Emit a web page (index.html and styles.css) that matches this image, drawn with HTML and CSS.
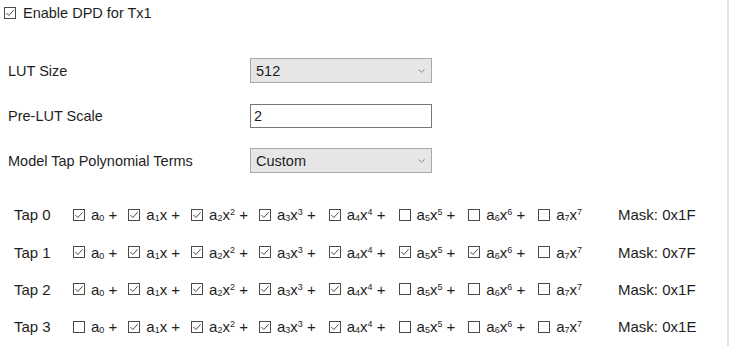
FILE: index.html
```html
<!DOCTYPE html>
<html lang="en">

<head>
    <meta charset="UTF-8">
    <meta name="viewport" content="width=device-width, initial-scale=1.0">
    <title>DPD Settings</title>
    <link rel="stylesheet" href="styles.css">
</head>

<body>
    <div class="panel">
        <div class="enable-row">
            <svg class="box" viewBox="0 0 12 12"><rect x="0.5" y="0.5" width="11" height="11"/><path d="M2.4 6 L4.9 8.5 L9.6 3.3"/></svg>
            <span>Enable DPD for Tx1</span>
        </div>

        <div class="form">
            <div class="label">LUT Size</div>
            <div class="select">
                <span>512</span>
                <svg class="chev" viewBox="0 0 7 4"><path d="M0.5 0.5 L3.5 3.3 L6.5 0.5"/></svg>
            </div>

            <div class="label">Pre-LUT Scale</div>
            <div class="input">2</div>

            <div class="label">Model Tap Polynomial Terms</div>
            <div class="select">
                <span>Custom</span>
                <svg class="chev" viewBox="0 0 7 4"><path d="M0.5 0.5 L3.5 3.3 L6.5 0.5"/></svg>
            </div>
        </div>

        <div class="taps" id="taps"></div>
    </div>

    <script>
        var tapsElem = document.getElementById('taps');
        var terms = [
            'a<sub>0</sub> +',
            'a<sub>1</sub>x +',
            'a<sub>2</sub>x<sup>2</sup> +',
            'a<sub>3</sub>x<sup>3</sup> +',
            'a<sub>4</sub>x<sup>4</sup> +',
            'a<sub>5</sub>x<sup>5</sup> +',
            'a<sub>6</sub>x<sup>6</sup> +',
            'a<sub>7</sub>x<sup>7</sup>'
        ];
        // mask per tap, bit 0 = a0
        var masks = [0x1F, 0x7F, 0x1F, 0x1E];

        var boxOn = '<svg class="box" viewBox="0 0 12 12"><rect x="0.5" y="0.5" width="11" height="11"/><path d="M2.4 6 L4.9 8.5 L9.6 3.3"/></svg>';
        var boxOff = '<svg class="box" viewBox="0 0 12 12"><rect x="0.5" y="0.5" width="11" height="11"/></svg>';

        masks.forEach(function (mask, i) {
            var html = '<span class="tap-name">Tap ' + i + '</span>';
            terms.forEach(function (t, b) {
                html += '<span class="term">' + ((mask >> b) & 1 ? boxOn : boxOff)
                    + '<span class="term-text">' + t + '</span></span>';
            });
            html += '<span class="mask">Mask: 0x' + mask.toString(16).toUpperCase() + '</span>';

            var row = document.createElement('div');
            row.classList.add('tap-row');
            row.innerHTML = html;
            tapsElem.appendChild(row);
        });
    </script>
</body>

</html>
```

FILE: styles.css
```css
* {
    margin: 0;
    padding: 0;
    box-sizing: border-box;
}

body {
    background: #fff;
    color: #1e1e1e;
    font-family: "Liberation Sans", Arial, sans-serif;
    font-size: 14.5px;
}

.panel {
    width: 729px;
    height: 346px;
    border-right: 2px solid #e4e4e4;
    overflow: hidden;
}

.box {
    width: 12px;
    height: 12px;
    flex: none;
}

.box rect,
.box path {
    fill: none;
    stroke: #4a4a4a;
    stroke-width: 1;
}

.enable-row {
    display: flex;
    align-items: center;
    gap: 7px;
    height: 26px;
    padding-left: 4px;
}

/* settings */
.form {
    display: grid;
    grid-template-columns: 242px 182px;
    grid-auto-rows: 25px;
    row-gap: 20px;
    align-items: center;
    margin-top: 32px;
    padding-left: 8px;
}

.select {
    height: 25px;
    display: flex;
    align-items: center;
    justify-content: space-between;
    padding: 0 6px 0 5px;
    background: #e6e6e6;
    border: 1px solid #aaa;
}

.chev {
    width: 7px;
    height: 4px;
}

.chev path {
    fill: none;
    stroke: #888;
    stroke-width: 1;
}

.input {
    height: 24px;
    display: flex;
    align-items: center;
    padding-left: 3px;
    border: 1px solid #777;
    background: #fff;
}

/* taps */
.taps {
    margin-top: 23px;
    padding-left: 14px;
}

.tap-row {
    display: flex;
    align-items: center;
    height: 37.4px;
    font-size: 15px;
}

.tap-name {
    width: 59px;
    flex: none;
}

.term {
    display: flex;
    align-items: center;
    gap: 6px;
    margin-right: 11px;
}

.term:nth-child(n+5) {
    margin-right: 13px;
}

.term-text {
    white-space: nowrap;
}

.term-text sub,
.term-text sup {
    font-size: 9px;
    line-height: 0;
}

.term-text sub {
    vertical-align: -1px;
}

.term-text sup {
    vertical-align: 5px;
}

.mask {
    margin-left: 23px;
}
```
